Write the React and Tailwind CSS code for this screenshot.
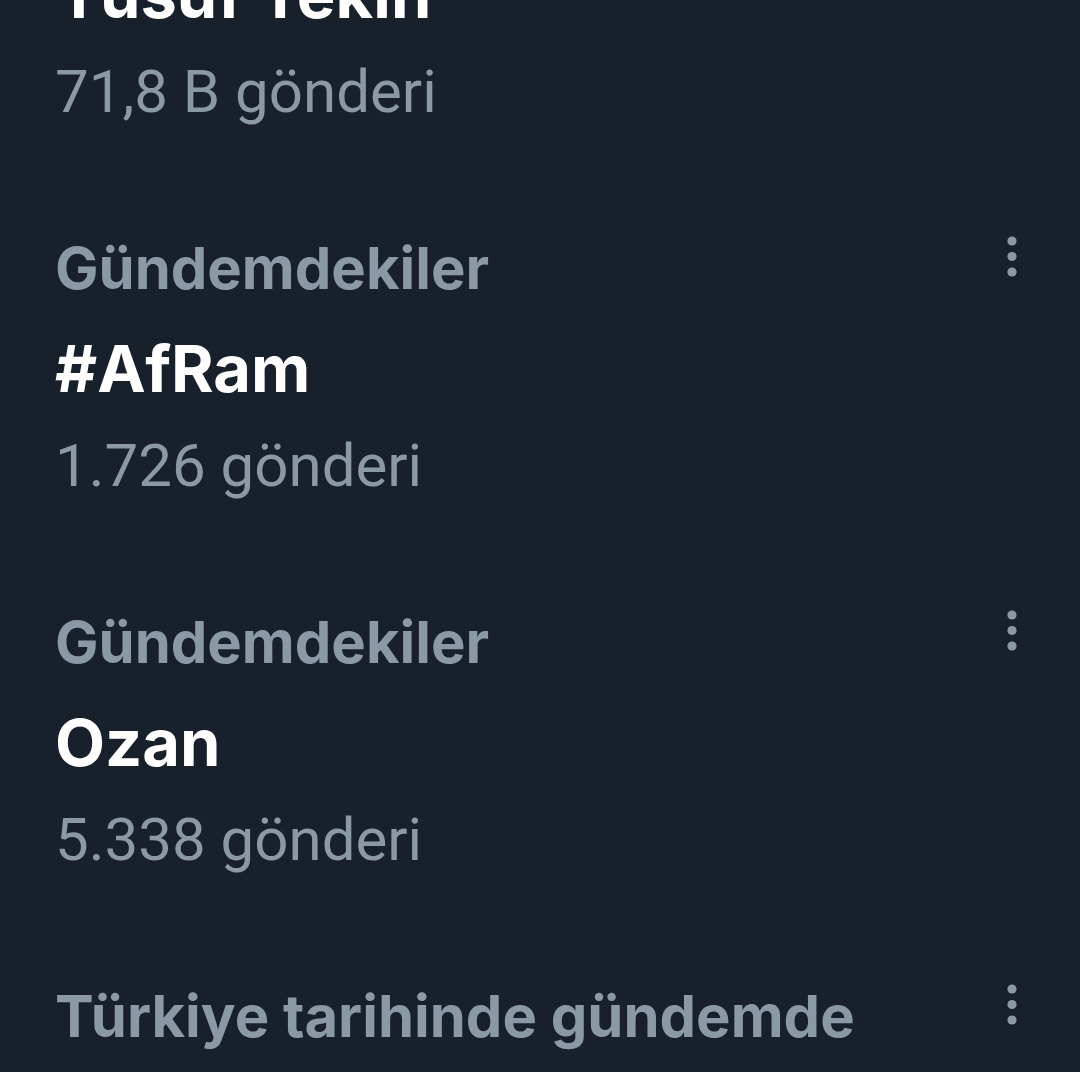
import React from 'react';

const trends = [
    { category: 'Gündemdekiler', title: 'Yusuf Tekin', count: '71,8 B gönderi' },
    { category: 'Gündemdekiler', title: '#AfRam', count: '1.726 gönderi' },
    { category: 'Gündemdekiler', title: 'Ozan', count: '5.338 gönderi' },
    { category: 'Türkiye tarihinde gündemde', title: 'Deprem', count: '12,4 B gönderi' },
];

function MoreIcon() {
    return (
        <svg width="24" height="48" viewBox="0 0 24 48" className="shrink-0 mt-[15px] mr-[56px]">
            <circle cx="12" cy="8" r="4.6" fill="#8b98a5" />
            <circle cx="12" cy="23.5" r="4.6" fill="#8b98a5" />
            <circle cx="12" cy="39" r="4.6" fill="#8b98a5" />
        </svg>
    );
}

function TrendItem({ category, title, count }) {
    return (
        <div className="pl-[55px] pb-[80px]">
            <div className="flex items-start justify-between">
                <span className="h-[102px] font-['Inter',sans-serif] text-[58px] leading-[100px] font-bold text-[#8b98a5]">{category}</span>
                <MoreIcon />
            </div>
            <div className="h-[100px] font-['Inter',sans-serif] text-[65px] leading-[98px] font-bold text-white">{title}</div>
            <div className="h-[92px] text-[60px] leading-[92px] text-[#8b98a5]">{count}</div>
        </div>
    );
}

export default function App() {
    return (
        <div className="h-[1072px] w-[1080px] overflow-hidden bg-[#17202b] font-['Roboto',sans-serif]">
            <div className="-mt-[156px]">
                {trends.map((t, i) => (
                    <TrendItem key={i} {...t} />
                ))}
            </div>
        </div>
    );
}
